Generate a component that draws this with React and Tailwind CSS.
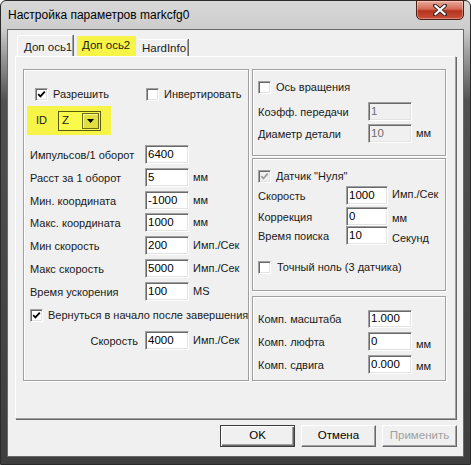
import React from "react";

const sunken =
  "border border-t-[#a0a0a0] border-l-[#a0a0a0] border-b-white border-r-white shadow-[inset_1px_1px_0_#696969,inset_-1px_-1px_0_#e3e3e3]";

function Check({ checked, disabled }) {
  return (
    <div
      className={`w-[13px] h-[13px] shrink-0 flex items-center justify-center ${sunken} ${
        disabled ? "bg-[#f0f0f0]" : "bg-white"
      }`}
    >
      {checked && (
        <svg width="9" height="9" viewBox="0 0 9 9">
          <path
            d="M1.2 4.2 L3.4 6.4 L7.8 1.6"
            stroke={disabled ? "#a0a0a0" : "#000"}
            strokeWidth="1.8"
            fill="none"
          />
        </svg>
      )}
    </div>
  );
}

function Field({ value, w = 44, h = 19, disabled }) {
  return (
    <div
      className={`${sunken} shrink-0 flex items-center pl-[2px] text-[11.5px] ${
        disabled ? "bg-[#f0f0f0] text-[#6d6d6d]" : "bg-white text-black"
      }`}
      style={{ width: w, height: h }}
    >
      {value}
    </div>
  );
}

function Row({ label, value, unit, lw, w = 44, h = 19, mt = 0, unitShift = 0, disabled, right }) {
  return (
    <div className="flex items-center h-[19px]" style={{ marginTop: mt }}>
      <div className={`shrink-0 pt-[1px] ${right ? "text-right pr-[7px]" : ""}`} style={{ width: lw }}>
        {label}
      </div>
      <Field value={value} w={w} h={h} disabled={disabled} />
      {unit && (
        <div className="ml-[4px]" style={{ marginTop: unitShift }}>
          {unit}
        </div>
      )}
    </div>
  );
}

function Group({ className, children }) {
  return (
    <div
      className={`border border-[#a0a0a0] shadow-[inset_1px_1px_0_#fff,1px_1px_0_#fff] flex flex-col ${className}`}
    >
      {children}
    </div>
  );
}

function Button({ children, def, disabled }) {
  return (
    <div
      className={`w-[75px] h-[22px] flex items-center justify-center text-[11.5px] ${
        def
          ? "border border-[#3c3c3c] shadow-[inset_1px_1px_0_#fff,inset_-1px_-1px_0_#696969,inset_-2px_-2px_0_#a0a0a0]"
          : "border border-t-white border-l-white border-b-[#696969] border-r-[#696969] shadow-[inset_-1px_-1px_0_#a0a0a0]"
      } bg-[#f0f0f0] ${disabled ? "text-[#a0a0a0]" : "text-black"}`}
    >
      {children}
    </div>
  );
}

export default function App() {
  return (
    <div className="w-[471px] h-[465px] overflow-hidden bg-white font-['Liberation_Sans',Arial,sans-serif] text-[11px] leading-none text-[#1a1a1a] whitespace-nowrap">
      <div className="relative w-[471px] h-[465px] rounded-t-[6px] border border-[#2a2a2a] bg-[linear-gradient(to_bottom,#d8d8d8_0px,#cdcdcd_28px,#9a9a9a_55px,#505050_100px,#3e3e3e_100%)] flex flex-col">
        {/* title bar */}
        <div className="h-[28px] flex items-center pl-[7px] text-[12px] text-black shrink-0">
          Настройка параметров markcfg0
        </div>
        <div className="absolute top-[-1px] right-[6px] w-[48px] h-[20px] rounded-b-[5px] border border-[#4a2016] bg-[linear-gradient(to_bottom,#e9a99a_0%,#d26a55_45%,#b6321c_55%,#c9503a_100%)] flex items-center justify-center shadow-[inset_0_0_0_1px_rgba(255,255,255,0.35)]">
          <svg width="14" height="12" viewBox="0 0 14 12">
            <path d="M2 1.5 L12 10.5 M12 1.5 L2 10.5" stroke="#3a2a2a" strokeWidth="4" strokeLinecap="square" />
            <path d="M2.5 2 L11.5 10 M11.5 2 L2.5 10" stroke="#fff" strokeWidth="2.2" strokeLinecap="square" />
          </svg>
        </div>

        {/* client area */}
        <div className="mx-[6px] h-[428px] border border-[#6a6a6a] bg-[#f0f0f0] flex flex-col pt-[5px] pl-[7px] pr-[6px]">
          {/* tabs */}
          <div className="flex items-end h-[21px] shrink-0 relative z-10 text-[11.5px]">
            <div className="ml-[2px] w-[56px] h-[21px] bg-[#f0f0f0] border-t border-l border-white border-r border-r-[#a0a0a0] shadow-[1px_0_0_#696969] flex items-center pl-[6px] pt-[4px] rounded-tl-[2px]">
              Доп ось1
            </div>
            <div className="ml-[4px] w-[59px] h-[20px] bg-[#f6f447] flex items-center pl-[5px] pb-[1px]">
              Доп ось2
            </div>
            <div className="ml-[1px] w-[51px] h-[17px] bg-[#f0f0f0] border-t border-white border-r border-r-[#a0a0a0] shadow-[1px_0_0_#696969] flex items-center pl-[5px] pt-[1px]">
              HardInfo
            </div>
          </div>

          {/* panel */}
          <div className="w-[441px] h-[363px] border border-t-white border-l-white border-b-[#a0a0a0] border-r-[#a0a0a0] shadow-[1px_1px_0_#696969] flex pl-[7px] pt-[12px] gap-[3px] shrink-0">
            {/* left group */}
            <Group className="w-[226px] h-[312px] px-[6px] pt-[17px]">
              <div className="flex items-center h-[14px]">
                <div className="w-[111px] ml-[5px] flex items-center gap-[5px]">
                  <Check checked />
                  <span>Разрешить</span>
                </div>
                <div className="flex items-center gap-[5px]">
                  <Check />
                  <span>Инвертировать</span>
                </div>
              </div>
              <div className="ml-[-3px] mt-[5px] w-[84px] h-[29px] bg-[#f6f447] flex items-center pl-[9px]">
                <span className="w-[22px]">ID</span>
                <div className="w-[43px] h-[20px] border border-[#5a5a10] bg-[#fafa4a] flex items-center justify-between pl-[3px] pr-[1px] text-[11.5px]">
                  <span>Z</span>
                  <div className="w-[17px] h-[16px] border border-[#6a6a20] bg-[#e0de40] shadow-[inset_1px_1px_0_#fafa80] flex items-center justify-center">
                    <svg width="7" height="4" viewBox="0 0 7 4">
                      <path d="M0 0 L7 0 L3.5 4 Z" fill="#000" />
                    </svg>
                  </div>
                </div>
              </div>
              <Row label="Импульсов/1 оборот" value="6400" lw={115} mt={10} />
              <Row label="Расст за 1 оборот" value="5" unit="мм" lw={115} mt={4} />
              <Row label="Мин. координата" value="-1000" unit="мм" lw={115} mt={4} />
              <Row label="Макс. координата" value="1000" unit="мм" lw={115} mt={3} />
              <Row label="Мин скорость" value="200" unit="Имп./Сек" lw={115} mt={4} />
              <Row label="Макс скорость" value="5000" unit="Имп./Сек" lw={115} mt={4} />
              <Row label="Время ускорения" value="100" unit="MS" lw={115} mt={4} />
              <div className="flex items-center gap-[5px] mt-[8px] h-[13px]">
                <Check checked />
                <span>Вернуться в начало после завершения</span>
              </div>
              <Row label="Скорость" value="4000" unit="Имп./Сек" lw={115} mt={9} right />
            </Group>

            {/* right column */}
            <div className="flex flex-col w-[194px]">
              <Group className="h-[87px] px-[5px] pt-[11px]">
                <div className="flex items-center gap-[5px] h-[13px]">
                  <Check />
                  <span>Ось вращения</span>
                </div>
                <Row label="Коэфф. передачи" value="1" lw={110} mt={8} disabled />
                <Row label="Диаметр детали" value="10" unit="мм" lw={110} mt={3} disabled />
              </Group>
              <Group className="h-[133px] mt-[2px] px-[5px] pt-[11px]">
                <div className="flex items-center gap-[5px] h-[13px]">
                  <Check checked disabled />
                  <span>Датчик "Нуля"</span>
                </div>
                <Row label="Скорость" value="1000" unit="Имп./Сек" lw={88} w={42} mt={3} unitShift={-2} />
                <Row label="Коррекция" value="0" unit="мм" lw={88} w={42} mt={2} unitShift={4} />
                <Row label="Время поиска" value="10" unit="Секунд" lw={88} w={42} mt={0} unitShift={5} />
                <div className="flex items-center gap-[6px] mt-[16px] h-[13px]">
                  <Check />
                  <span>Точный ноль (3 датчика)</span>
                </div>
              </Group>
              <Group className="h-[85px] mt-[5px] px-[5px] pt-[12px]">
                <Row label="Комп. масштаба" value="1.000" lw={110} h={18} />
                <Row label="Комп. люфта" value="0" unit="мм" lw={110} mt={4} unitShift={5} />
                <Row label="Комп. сдвига" value="0.000" unit="мм" lw={110} mt={4} unitShift={4} />
              </Group>
            </div>
          </div>

          {/* buttons */}
          <div className="flex justify-end gap-[6px] mt-[6px]">
            <Button def>OK</Button>
            <Button>Отмена</Button>
            <Button disabled>Применить</Button>
          </div>
        </div>
      </div>
    </div>
  );
}
